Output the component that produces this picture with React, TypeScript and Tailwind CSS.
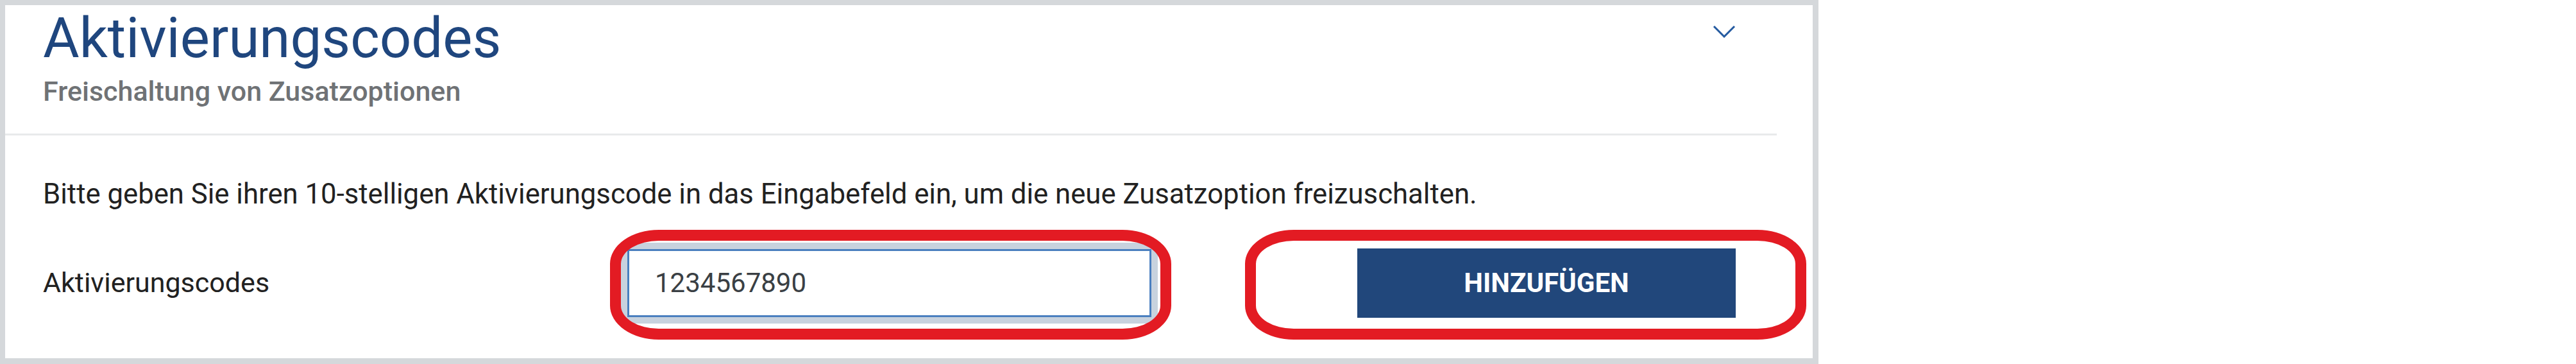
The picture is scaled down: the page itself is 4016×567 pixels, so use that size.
import { useState } from "react";

export default function App() {
  const [code, setCode] = useState("1234567890");

  return (
    <div className="flex h-[567px] w-[4016px] bg-white font-['Roboto',sans-serif]">
      <div className="flex w-[2835px] flex-col border-x-[8px] border-y-[8px] border-[#d5d8db] bg-white border-r-[9px] border-b-[9px]">
        {/* header */}
        <div className="flex items-start justify-between pl-[59px] pr-[120px] pt-[8px] pb-[44px]">
          <div>
            <h1 className="text-[87px] font-normal leading-none text-[#1f467e]">Aktivierungscodes</h1>
            <p className="mt-[18px] text-[43px] font-medium leading-none text-[#6f7275]">
              Freischaltung von Zusatzoptionen
            </p>
          </div>
          <svg width="36" height="20" viewBox="0 0 36 20" className="mt-[23px]" fill="none">
            <polyline points="2,2 18,18 34,2" stroke="#245aa0" strokeWidth="3" />
          </svg>
        </div>
        <div className="mr-[56px] h-[3px] bg-[#e8eaeb]" />

        {/* body */}
        <div className="pl-[59px] pt-[70px]">
          <p className="text-[43.7px] leading-none text-[#212121]">
            Bitte geben Sie ihren 10-stelligen Aktivierungscode in das Eingabefeld ein, um die neue Zusatzoption freizuschalten.
          </p>
          <div className="mt-[62px] flex items-center">
            <label className="w-[911px] text-[43px] leading-none text-[#212121]">Aktivierungscodes</label>
            <div className="relative">
              <input
                autoFocus
                value={code}
                onChange={(e) => setCode(e.target.value)}
                className="h-[106px] w-[817px] border-[3px] border-[#4a7fbf] bg-white pl-[40px] text-[42px] text-[#3a3f44] outline-none ring-[10px] ring-[#c8d2de] caret-[#3a3f44]"
              />
              <span className="pointer-events-none absolute -left-[27px] -top-[30px] h-[171px] w-[875px] rounded-[76px/53px] border-[17px] border-[#e31b23]" />
            </div>
            <div className="relative ml-[321px]">
              <button className="h-[108px] w-[590px] bg-[#21477b] text-[42px] font-bold uppercase text-white">
                Hinzufügen
              </button>
              <span className="pointer-events-none absolute -left-[175px] -top-[29px] h-[171px] w-[875px] rounded-[76px/53px] border-[17px] border-[#e31b23]" />
            </div>
          </div>
        </div>
      </div>
    </div>
  );
}
